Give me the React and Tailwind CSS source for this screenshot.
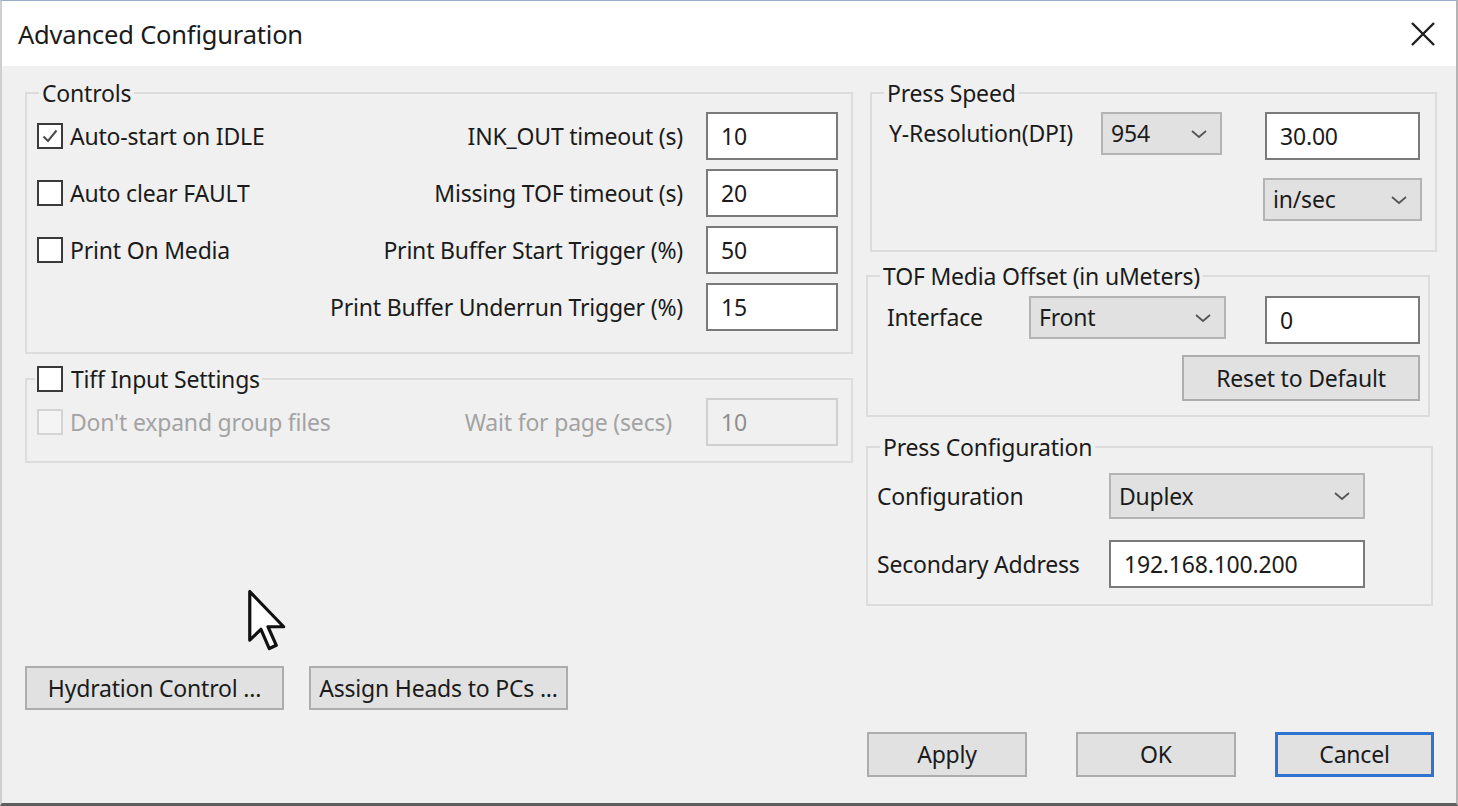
import React from 'react';

// Advanced Configuration dialog — Windows-style settings window

const FONT = { fontFamily: '"Noto Sans", "Open Sans", Arial, sans-serif' };

function Checkbox({ checked = false, disabled = false }) {
  return (
    <span
      className={`w-[26px] h-[26px] shrink-0 border-2 flex items-center justify-center ${
        disabled ? 'border-[#d4d4d4] bg-[#f4f4f4]' : 'border-[#3a3a3a] bg-white'
      }`}
    >
      {checked && (
        <svg width="18" height="18" viewBox="0 0 18 18">
          <path d="M2.5 9.5 L7 14 L15.5 3.5" fill="none" stroke="#4a4a4a" strokeWidth="2" />
        </svg>
      )}
    </span>
  );
}

function Chevron() {
  return (
    <svg width="18" height="10" viewBox="0 0 18 10" className="shrink-0">
      <path d="M2 2 L9 8 L16 2" fill="none" stroke="#555" strokeWidth="1.8" />
    </svg>
  );
}

function Select({ value, className = '' }) {
  return (
    <div
      className={`h-[43px] bg-[#e1e1e1] border-2 border-[#b4b4b4] flex items-center justify-between pl-[8px] pr-[12px] text-[#1b1b1b] ${className}`}
    >
      <span>{value}</span>
      <Chevron />
    </div>
  );
}

function TextBox({ value, disabled = false, className = '' }) {
  return (
    <input
      readOnly
      defaultValue={value}
      className={`h-[48px] shrink-0 border-2 pl-[13px] outline-none ${
        disabled
          ? 'bg-[#f0f0f0] border-[#cfcfcf] text-[#8f8f8f]'
          : 'bg-white border-[#7a7a7a] text-[#1b1b1b]'
      } ${className}`}
    />
  );
}

function Button({ children, primary = false, className = '' }) {
  return (
    <button
      className={`bg-[#e1e1e1] text-[#1b1b1b] flex items-center justify-center whitespace-nowrap ${
        primary ? 'border-[3px] border-[#2f74d0]' : 'border-2 border-[#adadad]'
      } ${className}`}
    >
      {children}
    </button>
  );
}

// Group box: border with the title sitting on the top edge
function Group({ title, className = '', legendClass = 'ml-[12px] px-[3px]', bodyClass = '', children }) {
  return (
    <fieldset className={`border-2 border-[#dcdcdc] ${className}`}>
      <legend className={`leading-[26px] text-[#1b1b1b] ${legendClass}`}>{title}</legend>
      <div className={bodyClass}>{children}</div>
    </fieldset>
  );
}

export default function App() {
  const controlRows = [
    { check: 'Auto-start on IDLE', checked: true, label: 'INK_OUT timeout (s)', value: '10' },
    { check: 'Auto clear FAULT', label: 'Missing TOF timeout (s)', value: '20' },
    { check: 'Print On Media', label: 'Print Buffer Start Trigger (%)', value: '50' },
    { check: null, label: 'Print Buffer Underrun Trigger (%)', value: '15' },
  ];

  return (
    <div
      style={FONT}
      className="w-[1458px] h-[806px] bg-[#f0f0f0] flex flex-col border-t border-[#9aaccc] border-l-2 border-l-[#cfcfcf] border-r-2 border-r-[#b4b4b4] border-b-[3px] border-b-[#5e5e5e] text-[23px] tracking-[-0.2px] overflow-hidden"
    >
      {/* Title bar */}
      <div className="h-[65px] bg-white flex items-center justify-between pl-[16px] pr-[20px] shrink-0">
        <span className="text-[25.5px] text-[#1b1b1b] pt-[1px]">Advanced Configuration</span>
        <svg width="26" height="26" viewBox="0 0 26 26">
          <path d="M2 2 L24 24 M24 2 L2 24" stroke="#1f1f1f" strokeWidth="2.4" />
        </svg>
      </div>

      {/* Body */}
      <div className="flex flex-1 pt-[14px]">
        {/* Left column */}
        <div className="w-[828px] ml-[23px] flex flex-col pb-[93px]">
          <Group title="Controls" bodyClass="pl-[10px] pr-[13px] pt-[6px] pb-[21px]">
            <div className="flex flex-col gap-[9px]">
              {controlRows.map((row, i) => (
                <div key={i} className="h-[48px] flex items-center">
                  <div className="flex-1 min-w-0 flex items-center">
                    {row.check && (
                      <>
                        <Checkbox checked={row.checked} />
                        <span className="ml-[7px] text-[#1b1b1b] whitespace-nowrap">{row.check}</span>
                      </>
                    )}
                  </div>
                  <span className="whitespace-nowrap text-right text-[#1b1b1b]">{row.label}</span>
                  <TextBox value={row.value} className="w-[132px] ml-[23px]" />
                </div>
              ))}
            </div>
          </Group>

          <Group
            title={
              <span className="flex items-center">
                <Checkbox />
                <span className="ml-[8px]">Tiff Input Settings</span>
              </span>
            }
            legendClass="ml-[8px] px-[2px]"
            className="mt-[12px]"
            bodyClass="pl-[10px] pr-[13px] pt-[6px] pb-[15px]"
          >
            <div className="h-[48px] flex items-center">
              <Checkbox disabled />
              <span className="ml-[7px] text-[#a3a3a3] whitespace-nowrap">Don't expand group files</span>
              <span className="flex-1 text-right text-[#a3a3a3] whitespace-nowrap">Wait for page (secs)</span>
              <TextBox value="10" disabled className="w-[132px] ml-[34px]" />
            </div>
          </Group>

          <div className="mt-auto flex">
            <Button className="w-[259px] h-[44px]">Hydration Control ...</Button>
            <Button className="w-[259px] h-[44px] ml-[25px]">Assign Heads to PCs ...</Button>
          </div>
        </div>

        {/* Right column */}
        <div className="w-[571px] ml-[13px] flex flex-col pb-[26px]">
          <Group title="Press Speed" className="ml-[4px] w-[567px]" bodyClass="pl-[17px] pt-[6px] pb-[29px]">
            <div className="flex items-start">
              <span className="w-[212px] h-[43px] flex items-center text-[#1b1b1b]">Y-Resolution(DPI)</span>
              <Select value="954" className="w-[121px]" />
              <TextBox value="30.00" className="w-[155px] ml-[43px]" />
            </div>
            <div className="flex mt-[18px] ml-[374px]">
              <Select value="in/sec" className="w-[159px]" />
            </div>
          </Group>

          <Group title="TOF Media Offset (in uMeters)" className="mt-[11px] w-[564px]" bodyClass="pl-[19px] pt-[7px] pb-[14px]">
            <div className="flex items-start">
              <span className="w-[142px] h-[43px] flex items-center text-[#1b1b1b]">Interface</span>
              <Select value="Front" className="w-[197px]" />
              <TextBox value="0" className="w-[155px] ml-[39px]" />
            </div>
            <div className="flex mt-[11px] ml-[295px]">
              <Button className="w-[238px] h-[46px]">Reset to Default</Button>
            </div>
          </Group>

          <Group title="Press Configuration" className="mt-[17px] w-[567px]" bodyClass="pl-[9px] pt-[13px] pb-[16px]">
            <div className="flex items-center">
              <span className="w-[232px] text-[#1b1b1b]">Configuration</span>
              <Select value="Duplex" className="w-[256px] h-[46px]" />
            </div>
            <div className="flex items-center mt-[21px]">
              <span className="w-[232px] text-[#1b1b1b]">Secondary Address</span>
              <TextBox value="192.168.100.200" className="w-[256px]" />
            </div>
          </Group>

          <div className="mt-auto flex">
            <Button className="w-[160px] h-[45px] ml-[1px]">Apply</Button>
            <Button className="w-[160px] h-[45px] ml-[49px]">OK</Button>
            <Button primary className="w-[159px] h-[45px] ml-[39px]">Cancel</Button>
          </div>
        </div>
      </div>

      {/* Mouse pointer */}
      <svg
        width="42"
        height="64"
        viewBox="0 0 13 20"
        className="absolute left-[247px] top-[589px] pointer-events-none"
      >
        <path
          d="M0.8 0.8 L0.8 16 L4.3 12.6 L6.9 18.6 L9.1 17.6 L6.5 11.8 L11.4 11.8 Z"
          fill="white"
          stroke="#111"
          strokeWidth="1"
          strokeLinejoin="round"
        />
      </svg>
    </div>
  );
}
